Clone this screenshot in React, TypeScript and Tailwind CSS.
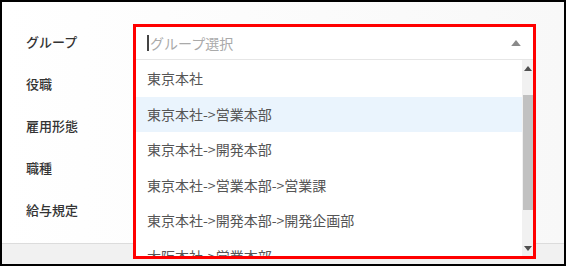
import React from 'react';

const labels = ['グループ', '役職', '雇用形態', '職種', '給与規定'];

const options = [
  '東京本社',
  '東京本社->営業本部',
  '東京本社->開発本部',
  '東京本社->営業本部->営業課',
  '東京本社->開発本部->開発企画部',
  '大阪本社->営業本部',
];

const Triangle: React.FC<{ up?: boolean; className?: string }> = ({ up = true, className }) => (
  <svg width="8" height="5" viewBox="0 0 8 5" className={className} aria-hidden="true">
    <path d={up ? 'M0 5 L4 0 L8 5 Z' : 'M0 0 L8 0 L4 5 Z'} fill="currentColor" />
  </svg>
);

const App: React.FC = () => {
  return (
    <div
      className="relative w-[566px] h-[266px] overflow-hidden border-2 border-black bg-gradient-to-r from-white to-[#f8f8f8] flex flex-col"
      style={{ fontFamily: '"Noto Sans CJK JP", "Noto Sans", sans-serif' }}
    >
      {/* Form labels */}
      <div className="h-[241px] flex flex-col pt-[30px] pl-[24px]">
        {labels.map((l) => (
          <div key={l} className="h-[42px] flex items-start text-[13px] font-medium text-[#333] leading-[20px]">
            {l}
          </div>
        ))}
      </div>

      {/* Footer bar */}
      <div className="flex-1 border-t border-[#dcdcdc] bg-[#f1f1f1]" />

      {/* Open group select (highlighted) */}
      <div className="absolute left-[131px] top-[22px] w-[403px] h-[235px] border-[3px] border-[#ff0000] bg-white flex flex-col">
        <div className="h-[33px] shrink-0 flex items-center border-b border-[#e6e6e6] pl-[11px] pr-[12px]">
          <span className="w-[2px] h-[16px] bg-[#444] mr-[1px]" />
          <span className="flex-1 text-[14px] text-[#aaa]">グループ選択</span>
          <Triangle className="text-[#8a8a8a] w-[10px] h-[6px]" />
        </div>

        <div className="flex-1 flex min-h-0">
          <ul className="flex-1 overflow-hidden pt-[1px]">
            {options.map((o, i) => (
              <li
                key={o}
                className={`h-[35.5px] flex items-center pl-[11px] text-[14px] text-[#555] ${i === 1 ? 'bg-[#eaf4fd]' : ''}`}
              >
                {o}
              </li>
            ))}
          </ul>

          {/* Scrollbar */}
          <div className="w-[11px] bg-[#f1f1f1] flex flex-col items-center">
            <div className="h-[17px] flex items-center justify-center">
              <Triangle className="text-[#505050]" />
            </div>
            <div className="h-[18px]" />
            <div className="w-[10px] h-[115px] bg-[#c1c1c1]" />
            <div className="flex-1" />
            <div className="h-[15px] flex items-center justify-center">
              <Triangle up={false} className="text-[#505050]" />
            </div>
          </div>
        </div>
      </div>
    </div>
  );
};

export default App;
